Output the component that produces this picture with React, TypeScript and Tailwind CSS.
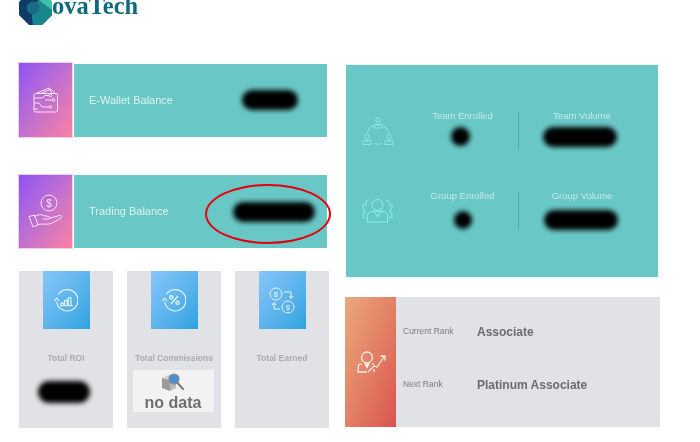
import type { ReactNode } from 'react';

function Blob({ className }: { className: string }) {
  return <div className={`rounded-full bg-black blur-[2.5px] ${className}`} aria-hidden />;
}

function Logo() {
  return (
    <div className="flex items-start pl-[19px]">
      <svg width="33" height="33" viewBox="0 0 33 33" className="shrink-0 -mt-[8px]">
        <polygon points="10,0 23,0 33,10 33,23 23,33 10,33 0,23 0,10" fill="#0d3a66" />
        <polygon points="14,33 23,33 33,23 33,10 24,4 13,14 13,26" fill="#17878d" />
        <polygon points="23,0 33,10 33,18 20,8" fill="#41bfa9" />
        <circle cx="14" cy="16" r="6.5" fill="#1a6a86" />
      </svg>
      <span className="font-['Liberation_Serif',serif] font-bold text-[24.5px] leading-[12px] text-[#12697f]">ovaTech</span>
    </div>
  );
}

function WalletIcon() {
  return (
    <svg width="26" height="26" viewBox="0 0 26 26" fill="none" stroke="currentColor" strokeWidth="1">
      <path d="M1 8.500V23a2 2 0 0 0 2 2h20a1.500 1.500 0 0 0 1.500-1.500V8a1.500 1.500 0 0 0-1.500-1.500H3a2 2 0 0 0-2 2Z" />
      <path d="M3 6.500 16 1l3 5.500M8 6.500 18 2l4 4.500" />
      <path d="M1 11h8l3-2.500h4M1 16h5l3 4h7M1 22h4M12 13h7" />
      <circle cx="17.500" cy="8.500" r="1.300" />
      <circle cx="17.500" cy="20" r="1.300" />
      <circle cx="20.500" cy="13" r="1.300" />
    </svg>
  );
}

function HandIcon() {
  return (
    <svg width="36" height="36" viewBox="0 0 36 36" fill="none" stroke="currentColor" strokeWidth="1">
      <circle cx="21" cy="9" r="8" />
      <text x="21" y="12.500" textAnchor="middle" fontSize="10" fill="currentColor" stroke="none" fontFamily="Liberation Sans, sans-serif">$</text>
      <path d="M1 22.500l5.500-1.500 3.500 10-5 2Z" />
      <path d="M6.500 22.500c3.500-2 6.500-2.500 9-1l5.500 1c1.500.5 1 2.500-.5 2.500H15" />
      <path d="M21.500 24.500l9.500-3c2.500-.5 3.500 1 2 2.500-4 2.500-8.500 5.500-12.500 6-4 .5-6.500-.5-10.500.5" />
    </svg>
  );
}

function RoiIcon() {
  return (
    <svg width="24" height="24" viewBox="0 0 27 27" fill="none" stroke="currentColor" strokeWidth="1.300">
      <path d="M5 7A12 12 0 1 1 3 15.500" />
      <path d="M.500 14.500 3 11.500l2.500 3" />
      <path d="M8 20v-3h3v3M12 20v-6h3v6M16 20v-9h3v9M7 20h14" />
    </svg>
  );
}

function PercentIcon() {
  return (
    <svg width="24" height="24" viewBox="0 0 27 27" fill="none" stroke="currentColor" strokeWidth="1.300">
      <path d="M5 7A12 12 0 1 1 3 15.500" />
      <path d="M.500 14.500 3 11.500l2.500 3" />
      <path d="M10 18 18 9" strokeWidth="1.600" />
      <circle cx="10.500" cy="10.500" r="1.800" strokeWidth="1.500" />
      <circle cx="17.500" cy="16.500" r="1.800" strokeWidth="1.500" />
    </svg>
  );
}

function ExchangeIcon() {
  return (
    <svg width="26" height="27" viewBox="0 0 26 27" fill="none" stroke="currentColor" strokeWidth="1">
      <circle cx="7" cy="7" r="6" />
      <circle cx="19" cy="20" r="6" />
      <text x="7" y="10" textAnchor="middle" fontSize="8" fill="currentColor" stroke="none" fontFamily="Liberation Sans, sans-serif">$</text>
      <text x="19" y="23" textAnchor="middle" fontSize="8" fill="currentColor" stroke="none" fontFamily="Liberation Sans, sans-serif">$</text>
      <path d="M15 5h7v6M20 9l2 2.500 2-2.500M11 22H5v-6M3 18l2-2.500 2 2.500" />
    </svg>
  );
}

function TeamIcon() {
  return (
    <svg width="32" height="28" viewBox="0 0 32 28" fill="none" stroke="currentColor" strokeWidth="1">
      <circle cx="16" cy="3" r="2.300" />
      <path d="M12 11V7.500h8V11ZM15 7.500l1 1.500 1-1.500" />
      <circle cx="5" cy="19.500" r="2.300" />
      <path d="M1 27.500V23.500h8v4ZM4 23.500l1 1.500 1-1.500" />
      <circle cx="27" cy="19.500" r="2.300" />
      <path d="M23 27.500V23.500h8v4ZM26 23.500l1 1.500 1-1.500" />
      <path d="M11 8.500C8 10 6 13 5.500 16M21 8.500c3 1.500 5 4.500 5.500 7.500M12 26.500c2.500 1 5.500 1 8 0" />
    </svg>
  );
}

function GroupIcon() {
  return (
    <svg width="31" height="25" viewBox="0 0 31 25" fill="none" stroke="currentColor" strokeWidth="1.100">
      <circle cx="15.500" cy="7" r="5.500" />
      <path d="M5.500 24v-6c0-3 2.500-4.500 5-4.500h10c2.500 0 5 1.500 5 4.500v6ZM12 14l3.500 4.500L19 14" />
      <path d="M7 2C4 2 3 5 4 8M1.500 5C.500 8 1 11 3 12.500M3.500 13C1.500 14 1 15.500 1 19l3 1" />
      <path d="M24 2c3 0 4 3 3 6M29.500 5c1 3 .500 6-1.500 7.500M27.500 13c2 1 2.500 2.500 2.500 6l-3 1" />
    </svg>
  );
}

function RankIcon() {
  return (
    <svg width="29" height="22" viewBox="0 0 29 22" fill="none" stroke="currentColor" strokeWidth="1.300" className="ml-[1px]">
      <circle cx="10" cy="6.500" r="5.500" />
      <path d="M5 12.500 1.500 14 1 21h9M15 12.500l2 1M17 21v-3" />
      <path d="M8 13l2 3.500 2-3.500Z" fill="currentColor" />
      <path d="M11 21l6-6 3 1L27 6" />
      <path d="M23.500 5H28v4.500" />
    </svg>
  );
}

function NoDataIcon() {
  return (
    <svg width="24" height="19" viewBox="0 0 24 19" className="shrink-0">
      <polygon points="1,5 9,7 9,18 1,15" fill="#9a9a9a" />
      <polygon points="9,7 15,4 15,15 9,18" fill="#bcbcbc" />
      <polygon points="1,5 7,2 15,4 9,7" fill="#d0d0d0" />
      <circle cx="13" cy="6" r="5" fill="#4a90d9" stroke="#8a8a8a" strokeWidth="1.200" />
      <path d="M16.500 10 22 16" stroke="#7a7a7a" strokeWidth="2" strokeLinecap="round" />
    </svg>
  );
}

function BalanceRow({ icon, label, children }: { icon: ReactNode; label: string; children: ReactNode }) {
  return (
    <div className="flex items-center h-full">
      <div className="flex items-center justify-center w-[55px] h-full shrink-0 border border-[#ecd0ee] bg-gradient-to-br from-[#8f4ff6] to-[#fb80a0] text-[#fbe6f4]">
        {icon}
      </div>
      <div className="flex items-center flex-1 ml-[1px] mr-[2px] h-[73px] pl-[15px] bg-[#69c8c6] text-[#dcf3f1] text-[11px] font-['Liberation_Sans',sans-serif]">
        <span className="w-[144px] shrink-0">{label}</span>
        {children}
      </div>
    </div>
  );
}

function StatCard({ icon, label, children }: { icon: ReactNode; label: string; children?: ReactNode }) {
  return (
    <div className="flex flex-col items-center w-[94px] h-full bg-[#e0e2e5]">
      <div className="flex items-center justify-center w-[47px] h-[58px] bg-gradient-to-br from-[#86c6fb] to-[#2aa3df] text-[#e8f6fe]">
        {icon}
      </div>
      <div className="mt-[23px] text-[8.5px] leading-[12px] font-bold text-[#a9acb1] whitespace-nowrap">{label}</div>
      {children}
    </div>
  );
}

function TeamRow({ icon, left, right, leftBlob, rightBlob }: { icon: ReactNode; left: string; right: string; leftBlob: string; rightBlob: string }) {
  return (
    <div className="flex items-center h-[37px]">
      <div className="flex justify-start w-[60px] pl-[16px] text-[#86ebe5]">{icon}</div>
      <div className="flex flex-col items-center justify-between w-[112px] h-full">
        <span className="text-[9.5px] leading-[12px] text-[#c5e9e7] -mt-[2px] ml-[1px]">{left}</span>
        <Blob className={leftBlob} />
      </div>
      <div className="w-[1px] h-full bg-[#4fa7a8]" />
      <div className="flex flex-col items-center justify-between w-[126px] h-full">
        <span className="text-[9.5px] leading-[12px] text-[#c5e9e7] -mt-[2px]">{right}</span>
        <Blob className={rightBlob} />
      </div>
    </div>
  );
}

export default function App() {
  return (
    <div className="relative w-[700px] h-[442px] overflow-hidden bg-white font-['Liberation_Sans',sans-serif] blur-[0.7px]">
      <div className="h-[62px] overflow-hidden">
        <Logo />
      </div>

      <div className="flex pl-[18px]">
        <div className="w-[311px] shrink-0">
          <div className="h-[76px]">
            <BalanceRow icon={<WalletIcon />} label="E-Wallet Balance">
              <Blob className="w-[56px] h-[20px] ml-[9px]" />
            </BalanceRow>
          </div>
          <div className="h-[75px] mt-[36px]">
            <BalanceRow icon={<HandIcon />} label="Trading Balance">
              <Blob className="w-[82px] h-[20px] mt-[1px]" />
            </BalanceRow>
          </div>
          <div className="flex gap-[14px] h-[157px] mt-[22px] pl-[1px]">
            <StatCard icon={<RoiIcon />} label="Total ROI">
              <Blob className="w-[52px] h-[22px] mt-[17px] -ml-[4px]" />
            </StatCard>
            <StatCard icon={<PercentIcon />} label="Total Commissions">
              <div className="flex flex-col items-center w-[81px] h-[42px] mt-[6px] -ml-[2px] pt-[3px] bg-[#f2f2f2]">
                <NoDataIcon />
                <span className="text-[16px] leading-[19px] font-bold text-[#6e6e6e] mt-[1px]">no data</span>
              </div>
            </StatCard>
            <StatCard icon={<ExchangeIcon />} label="Total Earned" />
          </div>
        </div>

        <div className="w-[315px] ml-[16px] pt-[3px] shrink-0">
          <div className="h-[212px] w-[312px] ml-[1px] pt-[47px] bg-[#69c8c6]">
            <TeamRow
              icon={<TeamIcon />}
              left="Team Enrolled"
              right="Team Volume"
              leftBlob="w-[19px] h-[19px] -ml-[3px] mb-[3px]"
              rightBlob="w-[74px] h-[20px] -ml-[4px] mb-[2px]"
            />
            <div className="h-[43px]" />
            <TeamRow
              icon={<GroupIcon />}
              left="Group Enrolled"
              right="Group Volume"
              leftBlob="w-[18px] h-[18px] ml-[2px]"
              rightBlob="w-[74px] h-[20px] -ml-[2px] -mb-[1px]"
            />
          </div>

          <div className="flex h-[130px] mt-[20px] bg-[#e0e2e5]">
            <div className="flex items-center justify-center w-[51px] shrink-0 bg-gradient-to-br from-[#e9a97c] to-[#d9534f] text-[#fbeee6]">
              <RankIcon />
            </div>
            <div className="flex flex-col pl-[7px] pt-[28px] gap-[40px]">
              <div className="flex items-center h-[13px]">
                <span className="w-[74px] text-[8.5px] text-[#7b7d82]">Current Rank</span>
                <span className="text-[12px] font-bold text-[#6a6c70]">Associate</span>
              </div>
              <div className="flex items-center h-[13px]">
                <span className="w-[74px] text-[8.5px] text-[#7b7d82]">Next Rank</span>
                <span className="text-[12px] font-bold text-[#6a6c70]">Platinum Associate</span>
              </div>
            </div>
          </div>
        </div>
      </div>

      <div className="absolute left-[205px] top-[184px] w-[126px] h-[60px] rounded-[50%] border-2 border-[#e3000f]" aria-hidden />
    </div>
  );
}
